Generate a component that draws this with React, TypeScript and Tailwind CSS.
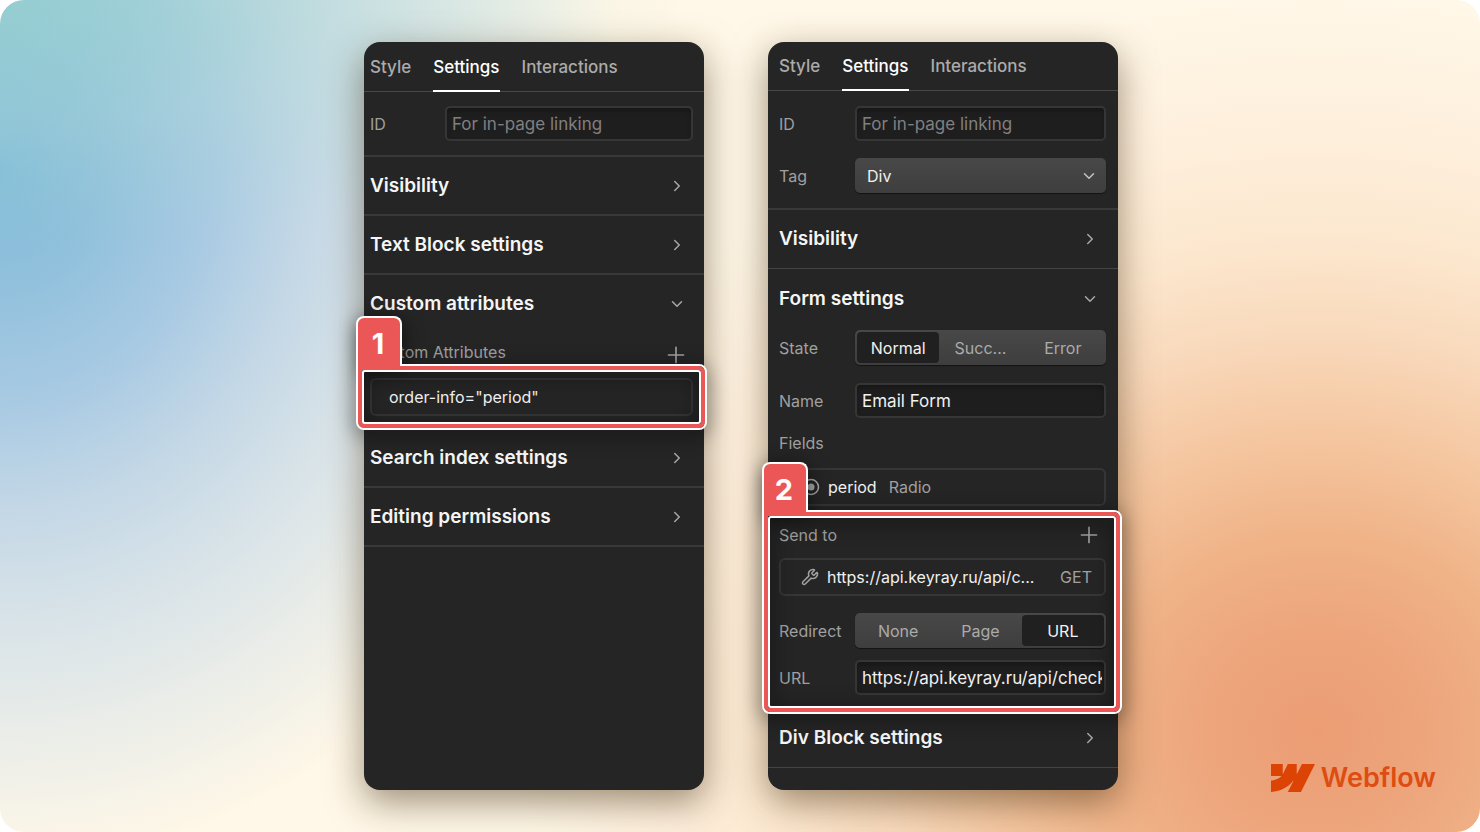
import type { ReactNode } from "react";
import { ChevronDown, ChevronRight, Plus, Wrench } from "lucide-react";

const fieldClass =
    "block h-[35px] w-full rounded-[5px] border-2 border-[#363636] bg-[#1e1e1e] pr-0.5 pl-[5px] text-[17px] text-[#f0f0f0] shadow-[inset_0_3px_4px_rgba(0,0,0,0.25)] placeholder:text-[#808080] focus:outline-none";

function Tabs({ className }: { className: string }) {
    return (
        <nav className={`flex shrink-0 gap-[22px] border-b border-[#484848] text-[17px] font-medium text-[#ababab] ${className}`}>
            <a href="#style" className="flex items-center pt-0.5">Style</a>
            <a href="#settings" className="-mb-px flex items-center border-b-2 border-white pt-[3px] text-white">Settings</a>
            <a href="#interactions" className="flex items-center pt-0.5">Interactions</a>
        </nav>
    );
}

function SectionHeader({ title, open = false }: { title: string; open?: boolean }) {
    return (
        <button type="button" className="flex h-[57px] w-full items-center justify-between pr-[7px] text-left text-[19px] leading-6 font-semibold text-[#f5f5f5]">
            {title}
            {open ? (
                <ChevronDown size={18} strokeWidth={2} className="text-[#a8a8a8]" />
            ) : (
                <ChevronRight size={18} strokeWidth={2} className="text-[#a8a8a8]" />
            )}
        </button>
    );
}

function Segmented({ label, options, active }: { label: string; options: string[]; active: string }) {
    return (
        <div role="group" aria-label={label} className="grid h-[35px] grid-cols-3 rounded-[5px] bg-linear-to-b from-[#484848] to-[#3e3e3e] p-0.5 shadow-[0_1px_1px_rgba(0,0,0,0.5)]">
            {options.map((option) => (
                <button
                    key={option}
                    type="button"
                    aria-pressed={option === active}
                    className={option === active ? "rounded-[4px] bg-[#202020] text-[#f0f0f0]" : "text-[#ababab]"}
                >
                    {option}
                </button>
            ))}
        </div>
    );
}

function Row({ label, htmlFor, children }: { label: string; htmlFor?: string; children: ReactNode }) {
    return (
        <div className="flex items-center">
            {htmlFor ? (
                <label htmlFor={htmlFor} className="w-[76px] shrink-0">{label}</label>
            ) : (
                <span className="w-[76px] shrink-0">{label}</span>
            )}
            <div className="min-w-0 flex-1">{children}</div>
        </div>
    );
}

// Numbered red frame laid over the group it sits in
function Callout({ step, className }: { step: number; className: string }) {
    return (
        <div className={`pointer-events-none absolute z-10 drop-shadow-[0_4px_10px_rgba(0,0,0,0.6)] ${className}`}>
            <div className="h-full rounded-lg rounded-tl-none border-2 border-white">
                <div className="h-full rounded-md rounded-tl-none border-4 border-[#eb5757]">
                    <div className="h-full rounded-[3px] border-2 border-white" />
                </div>
            </div>
            <div className="absolute bottom-full left-0 -mb-0.5 flex h-[50px] w-[46px] items-center justify-center rounded-t-lg border-2 border-b-0 border-white bg-[#eb5757] pr-0.5 pt-1 text-[29px] font-bold text-white">
                {step}
            </div>
        </div>
    );
}

function TextBlockPanel() {
    return (
        <section className="flex w-[340px] flex-col overflow-x-visible overflow-y-clip rounded-2xl bg-[#252525] shadow-[0_12px_36px_rgba(60,40,10,0.5)]">
            <Tabs className="h-[50px] px-1.5" />
            <div className="flex items-center border-b-2 border-[#393939] py-3.5 pr-[11px] pl-1.5">
                <label htmlFor="block-id" className="w-[75px] shrink-0">ID</label>
                <input id="block-id" className={fieldClass} placeholder="For in-page linking" />
            </div>
            <div className="border-b-2 border-[#393939] pr-[11px] pl-1.5">
                <SectionHeader title="Visibility" />
            </div>
            <div className="border-b-2 border-[#393939] pr-[11px] pl-1.5">
                <SectionHeader title="Text Block settings" />
            </div>
            <div className="border-b-2 border-[#393939] pr-[11px] pb-[11px] pl-1.5">
                <SectionHeader title="Custom attributes" open />
                <div className="flex h-[46px] items-center justify-between pr-1">
                    <span className="mb-1.5">Custom Attributes</span>
                    <button type="button" aria-label="Add attribute">
                        <Plus size={26} strokeWidth={1.5} />
                    </button>
                </div>
                <div className="relative">
                    <button type="button" className="block h-[38px] w-full rounded-md border-2 border-[#363636] px-[17px] text-left text-[#f0f0f0]">
                        order-info="period"
                    </button>
                    <Callout step={1} className="-inset-3.5" />
                </div>
            </div>
            <div className="border-b-2 border-[#393939] pr-[11px] pl-1.5">
                <SectionHeader title="Search index settings" />
            </div>
            <div className="border-b-2 border-[#393939] pr-[11px] pl-1.5">
                <SectionHeader title="Editing permissions" />
            </div>
        </section>
    );
}

function FormPanel() {
    return (
        <section className="flex w-[350px] flex-col overflow-x-visible overflow-y-clip rounded-2xl bg-[#252525] shadow-[0_12px_36px_rgba(60,40,10,0.5)]">
            <Tabs className="h-[49px] px-[11px]" />
            <div className="flex shrink-0 flex-col gap-[17px] border-b-2 border-[#393939] py-[15px] pr-3 pl-[11px]">
                <Row label="ID" htmlFor="form-id">
                    <input id="form-id" className={fieldClass} placeholder="For in-page linking" />
                </Row>
                <Row label="Tag" htmlFor="form-tag">
                    <div className="relative">
                        <select id="form-tag" className="block h-[35px] w-full appearance-none rounded-[5px] bg-linear-to-b from-[#484848] to-[#3e3e3e] px-3 text-[#f0f0f0] shadow-[0_1px_1px_rgba(0,0,0,0.5)]">
                            <option>Div</option>
                        </select>
                        <ChevronDown size={18} strokeWidth={2} className="pointer-events-none absolute top-[9px] right-2 text-[#c4c4c4]" />
                    </div>
                </Row>
            </div>
            <div className="shrink-0 border-b border-[#444] pb-px pr-3 pl-[11px]">
                <SectionHeader title="Visibility" />
            </div>
            <div className="shrink-0 border-b border-[#444] pt-px pr-3 pb-[13px] pl-[11px]">
                <SectionHeader title="Form settings" open />
                <div className="flex flex-col gap-[18px] pt-[3px]">
                    <Row label="State">
                        <Segmented label="State" options={["Normal", "Succ...", "Error"]} active="Normal" />
                    </Row>
                    <Row label="Name" htmlFor="form-name">
                        <input id="form-name" className={fieldClass} defaultValue="Email Form" />
                    </Row>
                </div>
                <div className="flex h-[50px] items-center">Fields</div>
                <button type="button" className="flex h-[38px] w-full items-center rounded-md border-2 border-[#363636] pl-[21px]">
                    <svg className="mr-2 h-[18px] w-[18px]" viewBox="0 0 18 18" fill="none">
                        <circle cx="9" cy="9" r="7.5" stroke="#ababab" strokeWidth="1.5" />
                        <circle cx="9" cy="9" r="3.5" fill="#ababab" />
                    </svg>
                    <span className="mr-3 text-[#f0f0f0]">period</span>
                    Radio
                </button>
                <div className="relative mt-1.5">
                    <div className="flex h-[46px] items-center justify-between pr-1">
                        Send to
                        <button type="button" aria-label="Add destination">
                            <Plus size={26} strokeWidth={1.5} />
                        </button>
                    </div>
                    <button type="button" className="flex h-[38px] w-full items-center rounded-md border-2 border-[#363636] pr-3 pl-5">
                        <Wrench size={18} strokeWidth={2} className="mr-2 shrink-0" />
                        <span className="text-[#f0f0f0]">https://api.keyray.ru/api/c...</span>
                        <span className="ml-auto">GET</span>
                    </button>
                    <div className="mt-[17px] flex flex-col gap-3">
                        <Row label="Redirect">
                            <Segmented label="Redirect" options={["None", "Page", "URL"]} active="URL" />
                        </Row>
                        <Row label="URL" htmlFor="form-url">
                            <input id="form-url" className={fieldClass} defaultValue="https://api.keyray.ru/api/check" />
                        </Row>
                    </div>
                    <Callout step={2} className="-top-0.5 -right-4 -bottom-[19px] -left-[17px]" />
                </div>
            </div>
            <div className="shrink-0 border-b border-[#444] pb-px pr-3 pl-[11px]">
                <SectionHeader title="Div Block settings" />
            </div>
            <div className="shrink-0 pt-0.5 pr-3 pl-[11px]">
                <SectionHeader title="Custom attributes" />
            </div>
        </section>
    );
}

function WebflowLogo() {
    return (
        <a href="#webflow" className="absolute right-11 bottom-9 flex items-center gap-1.5 text-[27px] leading-9 font-semibold text-[#dd4d12]">
            <svg className="h-7 w-11" viewBox="0 4.515 24 14.97" fill="#dc4405" preserveAspectRatio="none">
                <path d="m24 4.515-7.658 14.97H9.149l3.205-6.204h-.144C9.566 16.713 5.621 18.973 0 19.485v-6.118s3.596-.213 5.71-2.435H0V4.515h6.417v5.278l.144-.001 2.622-5.277h4.854v5.244h.144l2.72-5.244H24Z" />
            </svg>
            Webflow
        </a>
    );
}

export default function App() {
    return (
        <main className="relative flex h-screen justify-center gap-16 rounded-3xl bg-[#fff7e7] bg-[radial-gradient(ellipse_46%_30%_at_0%_0%,rgba(145,212,200,0.6),rgba(170,220,208,0.3)_50%,rgba(200,230,220,0)),radial-gradient(ellipse_42%_84%_at_0%_20%,#80bbd9_0%,#90c0dc_16%,#a9cae3_34%,#c5d8e6_50%,#d8e3e8_65%,#e9ece8_80%,#f6f3e8_92%,rgba(255,247,231,0)_100%),radial-gradient(ellipse_54%_88%_at_89%_88%,#ec9d74_0%,#eda57c_14%,#f0b388_27%,#f5c7a1_41%,#f9dabd_55%,#fce8cf_68%,#feefdc_82%,rgba(255,247,231,0)_100%)] py-[42px] pl-0.5 font-['Inter',sans-serif] text-base text-[#a0a0a0]">
            <TextBlockPanel />
            <FormPanel />
            <WebflowLogo />
        </main>
    );
}
